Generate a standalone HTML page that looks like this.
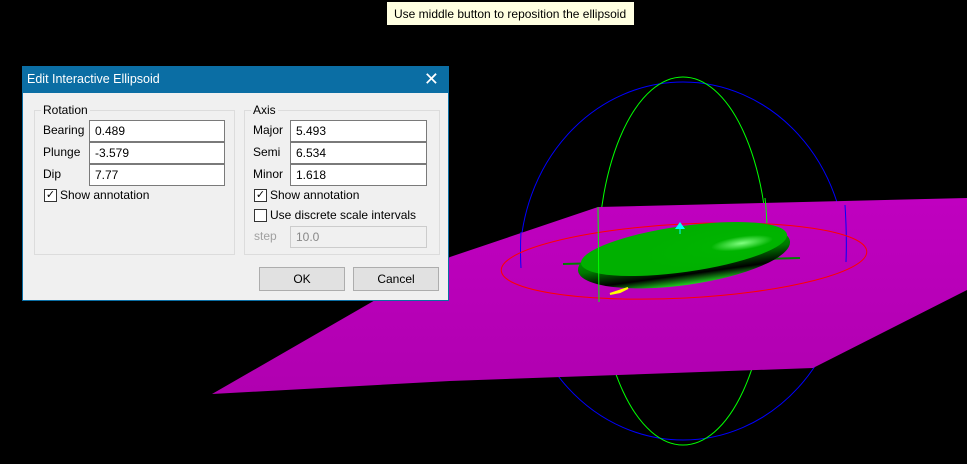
<!DOCTYPE html>
<html><head><meta charset="utf-8"><style>
body{margin:0;width:967px;height:464px;background:#000;position:relative;overflow:hidden;font-family:"Liberation Sans",sans-serif;font-size:12px;color:#000}
.a{position:absolute}
.tip{left:386px;top:1px;width:249px;height:25px;background:#ffffe1;border:1px solid #000;box-sizing:border-box;line-height:24px;padding-left:7px;font-size:12px;color:#000}
.dlg{left:22px;top:66px;width:427px;height:235px;background:#f0f0f0;border:1px solid #0b6ea4;box-sizing:border-box}
.title{left:0;top:0;width:425px;height:26px;background:#0b6ea4;color:#fff;font-size:12.5px;line-height:25px;padding-left:4px;box-sizing:border-box}
.grp{border:1px solid #dcdcdc;box-sizing:border-box}
.lg{background:#f0f0f0;padding:0 2px;font-size:12px}
.in{background:#fff;border:1px solid #7a7a7a;box-sizing:border-box;height:22px;line-height:20px;padding-left:5px;font-size:12px}
.cb{width:13px;height:13px;border:1px solid #333;background:#fff;box-sizing:border-box;font-size:11px;line-height:11px;text-align:center}
.btn{background:#e1e1e1;border:1px solid #adadad;box-sizing:border-box;height:24px;line-height:22px;text-align:center}
</style></head><body>
<svg class="a" style="left:0;top:0" width="967" height="464">
<defs>
<linearGradient id="pg" x1="0" y1="0" x2="0" y2="1"><stop offset="0" stop-color="#c000c0"/><stop offset="1" stop-color="#b000b0"/></linearGradient>
<radialGradient id="eg" cx="0.78" cy="0.55" r="0.5"><stop offset="0" stop-color="#80ff80"/><stop offset="0.3" stop-color="#00b400"/><stop offset="1" stop-color="#00b000"/></radialGradient>
<linearGradient id="es" x1="0" y1="0" x2="0" y2="1"><stop offset="0" stop-color="#00c800"/><stop offset="0.55" stop-color="#007800"/><stop offset="0.82" stop-color="#000"/><stop offset="1" stop-color="#20d020"/></linearGradient>
<clipPath id="pc"><polygon points="212,394 450,257 598,207 967,198 967,290 813,368 450,381"/></clipPath>
</defs>
<ellipse cx="683" cy="261" rx="163" ry="179" fill="none" stroke="#0000ff" stroke-width="1"/>
<ellipse cx="683" cy="261" rx="85" ry="184" fill="none" stroke="#00ff00" stroke-width="1"/>
<polygon points="212,394 450,257 598,207 967,198 967,290 813,368 450,381" fill="url(#pg)"/>
<g clip-path="url(#pc)">
<rect x="500" y="200" width="30" height="70" fill="none"/>
</g>
<path d="M521 232 Q520 250 521 268" fill="none" stroke="#0000ff"/>
<path d="M845 205 Q847 235 846 262" fill="none" stroke="#0000ff"/>
<path d="M765 198 Q767 215 767 232" fill="none" stroke="#00ff00"/>
<ellipse cx="684" cy="261" rx="183" ry="37" transform="rotate(-3 684 261)" fill="none" stroke="#ff0000" stroke-width="1"/>
<line x1="563" y1="264" x2="800" y2="258" stroke="#008000" stroke-width="2"/>
<ellipse cx="684" cy="256" rx="107" ry="29" transform="rotate(-8 684 256)" fill="url(#es)"/>
<ellipse cx="684" cy="249" rx="104" ry="23" transform="rotate(-8 684 249)" fill="url(#eg)"/>
<line x1="598" y1="207" x2="599" y2="302" stroke="#00ff00"/>
<polygon points="675,229 680,222 685,229" fill="#00ffff"/>
<line x1="680" y1="229" x2="680" y2="234" stroke="#00ffff"/>
<polygon points="610,294 628,288 620,292" fill="#ffff00" stroke="#ffff00" stroke-width="2"/>
</svg>
<div class="a tip">Use middle button to reposition the ellipsoid</div>
<div class="a dlg">
 <div class="a title">Edit Interactive Ellipsoid<span class="a" style="right:9px;top:0;font-size:18px;font-weight:normal">✕</span></div>
 <div class="a grp" style="left:11px;top:43px;width:201px;height:145px"></div>
 <div class="a lg" style="left:18px;top:36px">Rotation</div>
 <div class="a" style="left:20px;top:56px">Bearing</div>
 <div class="a" style="left:20px;top:78px">Plunge</div>
 <div class="a" style="left:20px;top:100px">Dip</div>
 <div class="a in" style="left:66px;top:53px;width:136px">0.489</div>
 <div class="a in" style="left:66px;top:75px;width:136px">-3.579</div>
 <div class="a in" style="left:66px;top:97px;width:136px">7.77</div>
 <div class="a cb" style="left:21px;top:122px">✓</div>
 <div class="a" style="left:37px;top:121px">Show annotation</div>
 <div class="a grp" style="left:221px;top:43px;width:196px;height:145px"></div>
 <div class="a lg" style="left:228px;top:36px">Axis</div>
 <div class="a" style="left:230px;top:56px">Major</div>
 <div class="a" style="left:230px;top:78px">Semi</div>
 <div class="a" style="left:230px;top:100px">Minor</div>
 <div class="a in" style="left:267px;top:53px;width:137px">5.493</div>
 <div class="a in" style="left:267px;top:75px;width:137px">6.534</div>
 <div class="a in" style="left:267px;top:97px;width:137px">1.618</div>
 <div class="a cb" style="left:231px;top:122px">✓</div>
 <div class="a" style="left:247px;top:121px">Show annotation</div>
 <div class="a cb" style="left:231px;top:142px"></div>
 <div class="a" style="left:247px;top:141px">Use discrete scale intervals</div>
 <div class="a" style="left:231px;top:162px;color:#a0a0a0">step</div>
 <div class="a in" style="left:267px;top:159px;width:137px;background:#f0f0f0;border-color:#ccc;color:#888">10.0</div>
 <div class="a btn" style="left:236px;top:200px;width:86px">OK</div>
 <div class="a btn" style="left:330px;top:200px;width:86px">Cancel</div>
</div>
</body></html>
